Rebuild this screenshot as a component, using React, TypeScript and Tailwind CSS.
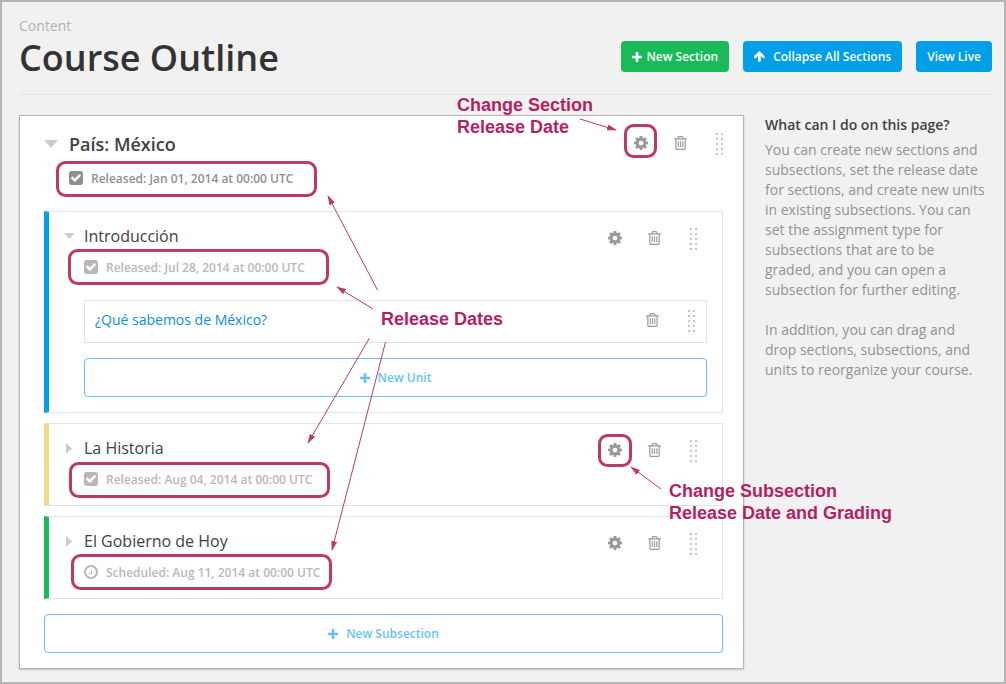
import { useState, type ReactNode } from "react";

const PATHS = {
  cog: "M1024 768q0-106-75-181t-181-75-181 75-75 181 75 181 181 75 181-75 75-181zm512-109v222q0 12-8 23t-20 13l-185 28q-19 54-39 91 35 50 107 138 10 12 10 25t-9 23q-27 37-99 108t-94 71q-12 0-26-9l-138-108q-44 23-91 38-16 136-29 186-7 28-36 28h-222q-14 0-24.5-8.5t-11.5-21.5l-28-184q-49-16-90-37l-141 107q-10 9-25 9-14 0-25-11-126-114-165-168-7-10-7-23 0-12 8-23 15-21 51-66.5t54-70.5q-27-50-41-99l-183-27q-13-2-21-12.5t-8-23.500v-222q0-12 8-23t19-13l186-28q14-46 39-92-40-57-107-138-10-12-10-24 0-10 9-23 26-36 98.5-107.5t94.5-71.5q13 0 26 10l138 107q44-23 91-38 16-136 29-186 7-28 36-28h222q14 0 24.5 8.5t11.5 21.5l28 184q49 16 90 37l142-107q9-9 24-9 13 0 25 10 129 119 165 170 7 8 7 22 0 12-8 23-15 21-51 66.5t-54 70.5q26 50 41 98l183 28q13 2 21 12.5t8 23.5z",
  trash:
    "M512 608v576q0 14-9 23t-23 9h-64q-14 0-23-9t-9-23v-576q0-14 9-23t23-9h64q14 0 23 9t9 23zm256 0v576q0 14-9 23t-23 9h-64q-14 0-23-9t-9-23v-576q0-14 9-23t23-9h64q14 0 23 9t9 23zm256 0v576q0 14-9 23t-23 9h-64q-14 0-23-9t-9-23v-576q0-14 9-23t23-9h64q14 0 23 9t9 23zm128 724v-948h-896v948q0 22 7 40.5t14.5 27 10.5 8.5h832q3 0 10.5-8.5t14.5-27 7-40.5zm-672-1076h448l-48-117q-7-9-17-11h-317q-10 2-17 11zm928 32v64q0 14-9 23t-23 9h-96v948q0 83-47 143.5t-113 60.5h-832q-66 0-113-58.5t-47-141.5v-952h-96q-14 0-23-9t-9-23v-64q0-14 9-23t23-9h309l70-167q15-37 54-63t79-26h320q40 0 79 26t54 63l70 167h309q14 0 23 9t9 23z",
  check:
    "M685 1171l614-614q19-19 19-45t-19-45l-102-102q-19-19-45-19t-45 19l-467 467-211-211q-19-19-45-19t-45 19l-102 102q-19 19-19 45t19 45l358 358q19 19 45 19t45-19zm851-883v960q0 119-84.5 203.5t-203.5 84.5h-960q-119 0-203.5-84.5t-84.5-203.5v-960q0-119 84.5-203.5t203.5-84.500h960q119 0 203.5 84.5t84.5 203.5z",
  clock:
    "M896 544v448q0 14-9 23t-23 9h-320q-14 0-23-9t-9-23v-64q0-14 9-23t23-9h224v-352q0-14 9-23t23-9h64q14 0 23 9t9 23zm416 224q0-148-73-273t-198-198-273-73-273 73-198 198-73 273 73 273 198 198 273 73 273-73 198-198 73-273zm224 0q0 209-103 385.5t-279.5 279.5-385.5 103-385.5-103-279.5-279.5-103-385.5 103-385.5 279.5-279.5 385.5-103 385.5 103 279.5 279.5 103 385.5z",
  plus: "M1408 608v192q0 40-28 68t-68 28h-416v416q0 40-28 68t-68 28h-192q-40 0-68-28t-28-68v-416h-416q-40 0-68-28t-28-68v-192q0-40 28-68t68-28h416v-416q0-40 28-68t68-28h192q40 0 68 28t28 68v416h416q40 0 68 28t28 68z",
  arrowUp:
    "M1523 896q0 52-37 91l-75 75q-38 38-91 38-54 0-90-38l-294-293v704q0 52-37.5 84.5t-90.5 32.5h-128q-53 0-90.5-32.5t-37.5-84.5v-704l-294 293q-36 38-90 38t-90-38l-75-75q-38-38-38-91 0-54 38-91l651-651q35-37 90-37 54 0 91 37l651 651q37 39 37 91z",
};

const BOXES = {
  cog: "0 0 1536 1536",
  trash: "0 0 1408 1536",
  check: "0 0 1536 1536",
  clock: "0 0 1536 1536",
  plus: "0 0 1408 1408",
  arrowUp: "0 100 1536 1500",
};

function Icon({ name, className }: { name: keyof typeof PATHS; className: string }) {
  return (
    <svg viewBox={BOXES[name]} className={`shrink-0 fill-current ${className}`} aria-hidden="true">
      <path d={PATHS[name]} />
    </svg>
  );
}

function DragHandle({ label }: { label: string }) {
  return (
    <button type="button" aria-label={`Reorder ${label}`} className="flex h-6 w-6 cursor-move items-end justify-center">
      <svg viewBox="0 0 7 22" className="h-[22px] w-[7px] fill-[#bfc5d4]" aria-hidden="true">
        {[0, 5, 10, 15, 20].map((y) => (
          <g key={y}>
            <rect x="0" y={y} width="2" height="2" />
            <rect x="5" y={y} width="2" height="2" />
          </g>
        ))}
      </svg>
    </button>
  );
}

function Actions({ label, settings = true }: { label: string; settings?: boolean }) {
  return (
    <div className="flex shrink-0 items-center gap-[15px] text-[#999]">
      {settings && (
        <button type="button" aria-label={`Configure ${label}`} className="flex size-6 items-center justify-center">
          <Icon name="cog" className="size-3.5" />
        </button>
      )}
      <button type="button" aria-label={`Delete ${label}`} className="flex size-6 items-center justify-center">
        <Icon name="trash" className="h-3.5 w-[13px]" />
      </button>
      <DragHandle label={label} />
    </div>
  );
}

function Caret({ open, large = false }: { open: boolean; large?: boolean }) {
  if (!open) {
    return (
      <svg viewBox="0 0 6 11" className="ml-0.5 h-[11px] w-1.5 fill-[#ccc]" aria-hidden="true">
        <path d="M0 0L6 5.500L0 11z" />
      </svg>
    );
  }
  return (
    <svg viewBox="0 0 14 8" className={large ? "h-2 w-3.5 fill-[#ccc]" : "h-1.5 w-[11px] fill-[#ccc]"} aria-hidden="true">
      <path d="M0 0H14L7 8z" />
    </svg>
  );
}

function Status({ icon, className, children }: { icon: "check" | "clock"; className: string; children: ReactNode }) {
  return (
    <p className={`flex h-6 items-center gap-2 text-xs font-semibold ${className}`}>
      <Icon name={icon} className="mb-0.5 size-3.5" />
      {children}
    </p>
  );
}

function NewButton({ children }: { children: ReactNode }) {
  return (
    <button
      type="button"
      className="flex h-[39px] w-full items-center justify-center gap-2 rounded border border-[#67c2f3] text-xs font-semibold text-[#67c2f3]"
    >
      <Icon name="plus" className="size-2.5" />
      {children}
    </button>
  );
}

type SubsectionProps = {
  title: string;
  status: string;
  icon: "check" | "clock";
  accent: string;
  initiallyOpen?: boolean;
  children?: ReactNode;
};

function Subsection({ title, status, icon, accent, initiallyOpen = false, children }: SubsectionProps) {
  const [open, setOpen] = useState(initiallyOpen);
  return (
    <li className={`border border-l-[5px] border-[#e3e3e3] pl-[15px] ${accent}`}>
      <div className="flex justify-between pt-3 pr-[17px]">
        <h3>
          <button
            type="button"
            aria-expanded={open}
            onClick={() => setOpen(!open)}
            className="flex h-6 items-center text-base text-[#414141]"
          >
            <span className="w-5">
              <Caret open={open} />
            </span>
            {title}
          </button>
        </h3>
        <div className="pt-0.5">
          <Actions label={title} />
        </div>
      </div>
      <Status icon={icon} className="mt-1.5 pl-5 text-[#b8b8b8]">
        {status}
      </Status>
      {open && children ? <div className="pt-5 pr-[15px] pb-[15px] pl-5">{children}</div> : <div className="h-[13px]" />}
    </li>
  );
}

const RINGS = [
  { x: 57.5, y: 162.5, w: 258, h: 33 },
  { x: 69.5, y: 250.5, w: 258, h: 33 },
  { x: 70.5, y: 463.5, w: 258, h: 33 },
  { x: 72.5, y: 555.5, w: 258, h: 33 },
  { x: 625.5, y: 125.5, w: 30, h: 31 },
  { x: 599.5, y: 435.5, w: 31, h: 30 },
];

const ARROWS = [
  [377.5, 290, 328, 196],
  [373, 309, 337, 287],
  [369.5, 338, 308, 443],
  [385.5, 342, 332, 550],
  [580, 119, 616, 130],
  [661, 489, 631, 467],
];

function Annotations() {
  return (
    <div className="pointer-events-none absolute top-0 left-0 font-['Liberation_Sans',Arial,sans-serif] text-lg/[22px] font-bold whitespace-nowrap text-[#b41f63]">
      <svg width="1002" height="680" viewBox="2 2 1002 680" className="max-w-none" aria-hidden="true">
        <defs>
          <marker id="tip" markerWidth="10" markerHeight="6" refX="9" refY="3" orient="auto" markerUnits="userSpaceOnUse">
            <path d="M0 0L10 3L0 6z" fill="#bd3a64" />
          </marker>
        </defs>
        {RINGS.map((r) => (
          <rect key={`${r.x}-${r.y}`} x={r.x} y={r.y} width={r.w} height={r.h} rx="8" fill="none" stroke="#bd3a64" strokeWidth="3" />
        ))}
        {ARROWS.map(([x1, y1, x2, y2]) => (
          <line key={`${x1}-${y1}`} x1={x1} y1={y1} x2={x2} y2={y2} stroke="#bd3a64" markerEnd="url(#tip)" />
        ))}
      </svg>
      <p className="absolute top-[92px] left-[455px]">
        Change Section
        <br />
        Release Date
      </p>
      <p className="absolute top-[306px] left-[379px]">Release Dates</p>
      <p className="absolute top-[478px] left-[667px]">
        Change Subsection
        <br />
        Release Date and Grading
      </p>
    </div>
  );
}

const HEADER_BUTTON = "flex h-[31px] items-center rounded px-[11px] text-xs font-semibold text-white";

export default function App() {
  const [open, setOpen] = useState(true);
  return (
    <div className="relative min-h-screen border-2 border-[#b5b5b5] bg-[#f1f1f1] pr-3 pb-[13px] pl-[17px] font-['Open_Sans',sans-serif]">
      <header className="flex items-end justify-between border-b border-[#e2e2e2] pt-3.5 pb-3.5">
        <div>
          <p className="text-sm/5 text-[#b2b2b2]">Content</p>
          <h1 className="text-4xl/[44px] font-semibold text-[#333]">Course Outline</h1>
        </div>
        <nav aria-label="Page actions" className="flex gap-3.5 pb-2">
          <button type="button" className={`${HEADER_BUTTON} gap-1 bg-[#19bb59]`}>
            <Icon name="plus" className="size-2.5" />
            New Section
          </button>
          <button type="button" onClick={() => setOpen(!open)} className={`${HEADER_BUTTON} gap-2 bg-[#009fe8]`}>
            <Icon name="arrowUp" className="size-[11px]" />
            Collapse All Sections
          </button>
          <a href="#live" className={`${HEADER_BUTTON} bg-[#009fe8]`}>
            View Live
          </a>
        </nav>
      </header>

      <div className="flex items-start gap-[21px] pt-5">
        <main className="min-w-0 flex-1 border border-[#b4b6b6] bg-white shadow-[0_1px_2px_rgba(0,0,0,0.2)]">
          <div className="flex justify-between pt-3.5 pr-3 pl-6">
            <h2 className="pt-0.5">
              <button
                type="button"
                aria-expanded={open}
                onClick={() => setOpen(!open)}
                className="flex h-6 items-center text-lg font-semibold text-[#414141]"
              >
                <span className="w-[25px]">
                  <Caret open={open} large />
                </span>
                País: México
              </button>
            </h2>
            <Actions label="País: México" />
          </div>
          <Status icon="check" className="mt-[11px] pl-[49px] text-[#8f8f8f]">
            Released: Jan 01, 2014 at 00:00 UTC
          </Status>
          {open && (
            <div className="pt-5 pr-5 pb-[15px] pl-6">
              <ul className="flex flex-col gap-2.5">
                <Subsection
                  title="Introducción"
                  status="Released: Jul 28, 2014 at 00:00 UTC"
                  icon="check"
                  accent="border-l-[#009fe8]"
                  initiallyOpen
                >
                  <div className="mb-[15px] flex h-[43px] items-center justify-between border border-[#e3e3e3] pr-[3px] pb-[3px] pl-2.5">
                    <a href="#unit" className="text-sm text-[#0890dd]">
                      ¿Qué sabemos de México?
                    </a>
                    <Actions label="¿Qué sabemos de México?" settings={false} />
                  </div>
                  <NewButton>New Unit</NewButton>
                </Subsection>
                <Subsection
                  title="La Historia"
                  status="Released: Aug 04, 2014 at 00:00 UTC"
                  icon="check"
                  accent="border-l-[#f3d98a]"
                />
                <Subsection
                  title="El Gobierno de Hoy"
                  status="Scheduled: Aug 11, 2014 at 00:00 UTC"
                  icon="clock"
                  accent="border-l-[#19bb59]"
                />
              </ul>
              <div className="pt-[15px]">
                <NewButton>New Subsection</NewButton>
              </div>
            </div>
          )}
        </main>

        <aside className="w-[227px] shrink-0 pr-1.5 text-sm/5 text-[#929292]">
          <h2 className="mb-[5px] font-semibold text-[#414141]">What can I do on this page?</h2>
          <p className="mb-5">
            You can create new sections and subsections, set the release date for sections, and create new units in existing
            subsections. You can set the assignment type for subsections that are to be graded, and you can open a subsection
            for further editing.
          </p>
          <p>In addition, you can drag and drop sections, subsections, and units to reorganize your course.</p>
        </aside>
      </div>
      <Annotations />
    </div>
  );
}
